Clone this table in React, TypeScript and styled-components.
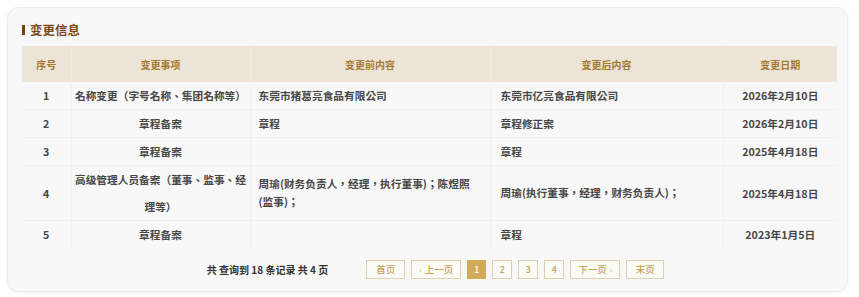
import React from "react";
import styled, { createGlobalStyle } from "styled-components";

const GlobalStyle = createGlobalStyle`
  html, body { margin: 0; padding: 0; background: #ffffff; }
  body { font-family: "Noto Sans CJK SC", "Noto Sans", sans-serif; }
`;

const Page = styled.div`
  padding: 7px;
`;

const Card = styled.section`
  box-sizing: border-box;
  width: 841px;
  background: #f8f8f8;
  border: 1px solid #ececec;
  border-radius: 12px;
  box-shadow: 0 1px 4px rgba(0, 0, 0, 0.06);
  padding: 12px 10px 12px 14px;
`;

const Title = styled.h2`
  display: flex;
  align-items: center;
  gap: 5px;
  margin: 0 0 6px 0;
  height: 20px;
  font-size: 12.5px;
  font-weight: 700;
  color: #7a4a14;
  line-height: 20px;
  &::before {
    content: "";
    display: block;
    width: 3px;
    height: 10px;
    background: #6e4211;
  }
`;

const Table = styled.table`
  width: 815px;
  table-layout: fixed;
  border-collapse: collapse;
`;

const HeadCell = styled.th`
  height: 36px;
  padding: 0;
  background: #ece4d6;
  color: #a37a30;
  font-size: 10px;
  font-weight: 700;
  text-align: center;
  border-left: 1px solid #f1ebe1;
  &:first-child { border-left: none; }
`;

const Cell = styled.td<{ $align?: "left" | "center"; $pad?: number; $lh?: number }>`
  padding: 0 ${(p) => p.$pad ?? 3}px;
  height: 27px;
  line-height: ${(p) => p.$lh ?? 27}px;
  font-family: "Noto Sans CJK TC", "Noto Sans CJK SC", sans-serif;
  font-size: 10.7px;
  font-weight: 700;
  color: #474747;
  text-align: ${(p) => p.$align ?? "center"};
  vertical-align: middle;
  text-spacing-trim: space-all;
  font-feature-settings: "halt" 0, "chws" 0, "palt" 0;
  border-top: 1px solid #f0f0f0;
  border-left: 1px solid #f0f0f0;
  &:first-child { border-left: none; }
`;

const Row = styled.tr`
  &:first-child td { border-top: none; }
`;

const Pager = styled.div`
  display: flex;
  align-items: center;
  justify-content: center;
  padding-left: 12px;
  margin-top: 12px;
  height: 19px;
`;

const Summary = styled.span`
  font-size: 10px;
  font-weight: 700;
  color: #333333;
  margin-right: 38px;
`;

const PageButtons = styled.div`
  display: flex;
  gap: 6px;
`;

const PageButton = styled.button<{ $active?: boolean; $w: number }>`
  box-sizing: border-box;
  width: ${(p) => p.$w}px;
  height: 19px;
  padding: 0;
  font-family: "Noto Sans CJK SC", "Noto Sans", sans-serif;
  font-size: 9.5px;
  font-weight: 500;
  line-height: 17px;
  border: 1px solid ${(p) => (p.$active ? "#d2aa58" : "#ddd0ad")};
  background: ${(p) => (p.$active ? "#d2aa58" : "#fbfbf8")};
  color: ${(p) => (p.$active ? "#ffffff" : "#c9a252")};
  display: flex;
  align-items: center;
  justify-content: center;
  gap: 3px;
  cursor: pointer;
`;

const Arrow = styled.span`
  font-size: 8px;
  color: #d2bb88;
  line-height: 1;
`;

type Rec = { no: number; item: string; before: string; after: string; date: string };

const records: Rec[] = [
  { no: 1, item: "名称变更（字号名称、集团名称等）", before: "东莞市猪葛亮食品有限公司", after: "东莞市亿亮食品有限公司", date: "2026年2月10日" },
  { no: 2, item: "章程备案", before: "章程", after: "章程修正案", date: "2026年2月10日" },
  { no: 3, item: "章程备案", before: "", after: "章程", date: "2025年4月18日" },
  { no: 4, item: "高级管理人员备案（董事、监事、经理等）", before: "周瑜(财务负责人，经理，执行董事)；陈煜照(监事)；", after: "周瑜(执行董事，经理，财务负责人)；", date: "2025年4月18日" },
  { no: 5, item: "章程备案", before: "", after: "章程", date: "2023年1月5日" },
];

export default function App() {
  return (
    <Page>
      <GlobalStyle />
      <Card>
        <Title>变更信息</Title>
        <Table>
          <colgroup>
            <col style={{ width: 49 }} />
            <col style={{ width: 179 }} />
            <col style={{ width: 240 }} />
            <col style={{ width: 233 }} />
            <col style={{ width: 114 }} />
          </colgroup>
          <thead>
            <tr>
              <HeadCell>序号</HeadCell>
              <HeadCell>变更事项</HeadCell>
              <HeadCell>变更前内容</HeadCell>
              <HeadCell>变更后内容</HeadCell>
              <HeadCell>变更日期</HeadCell>
            </tr>
          </thead>
          <tbody>
            {records.map((r) => (
              <Row key={r.no}>
                <Cell>{r.no}</Cell>
                <Cell>{r.item}</Cell>
                <Cell $align="left" $pad={8} $lh={18}>{r.before}</Cell>
                <Cell $align="left" $pad={10} $lh={18}>{r.after}</Cell>
                <Cell>{r.date}</Cell>
              </Row>
            ))}
          </tbody>
        </Table>
        <Pager>
          <Summary>共 查询到 18 条记录 共 4 页</Summary>
          <PageButtons>
            <PageButton $w={39}>首页</PageButton>
            <PageButton $w={50}><Arrow>‹</Arrow>上一页</PageButton>
            <PageButton $w={19} $active>1</PageButton>
            <PageButton $w={20}>2</PageButton>
            <PageButton $w={20}>3</PageButton>
            <PageButton $w={20}>4</PageButton>
            <PageButton $w={50}>下一页<Arrow>›</Arrow></PageButton>
            <PageButton $w={38}>末页</PageButton>
          </PageButtons>
        </Pager>
      </Card>
    </Page>
  );
}
